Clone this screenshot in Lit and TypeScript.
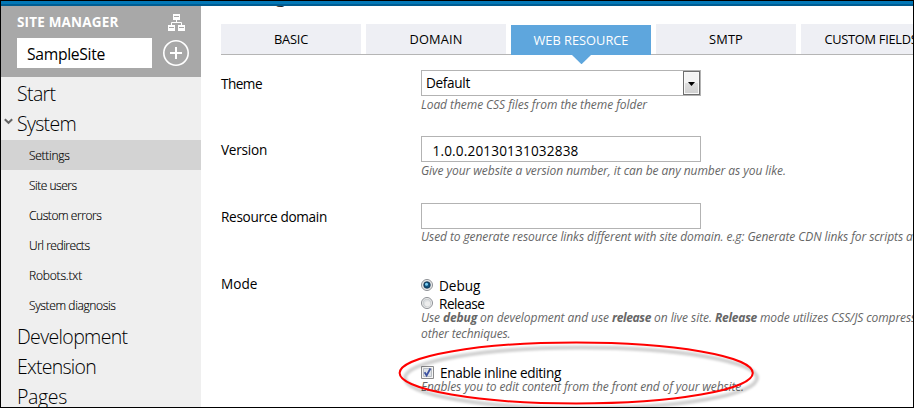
import { LitElement, html, css, svg } from "lit";
import { customElement } from "lit/decorators.js";

// A run of text with the width its line is set to.
const run = (text: string, width: number) =>
  html`<span class="run" data-width=${width}>${text}</span>`;

const subItems: [string, number][] = [
  ["Settings", 40.5],
  ["Site users", 47.5],
  ["Custom errors", 72.5],
  ["Url redirects", 60.5],
  ["Robots.txt", 53],
  ["System diagnosis", 86.5],
];

const tabs: [string, number][] = [
  ["BASIC", 34],
  ["DOMAIN", 53],
  ["WEB RESOURCE", 95],
  ["SMTP", 34],
  ["CUSTOM FIELDS", 93],
];

@customElement("app-root")
export class AppRoot extends LitElement {
  static styles = css`
    :host {
      display: block;
      box-sizing: border-box;
      position: relative;
      width: 914px;
      height: 408px;
      overflow: hidden;
      border: 1px solid #000;
      background: #fff;
      color: #000;
      font-family: "Open Sans", "Noto Sans", sans-serif;
      font-size: 13.6px;
    }
    * { box-sizing: border-box; }
    .run { display: inline-block; white-space: pre; }
    .bar { height: 5px; background: #0277b6; border-bottom: 2px solid #005c91; }
    .page { display: flex; height: 401px; overflow: hidden; }
    .side { width: 200px; flex: none; background: #efefef; font-weight: 300; }
    .head {
      height: 71px;
      background: #a8a8a8;
      display: grid;
      grid-template-columns: 135px 26px;
      grid-template-rows: 32px 30px;
      column-gap: 11px;
      padding-left: 16px;
      align-items: center;
      justify-items: center;
    }
    .brand { justify-self: start; color: #fff; font-weight: 700; font-size: 13.5px; line-height: 20px; }
    .site { width: 135px; height: 30px; background: #fff; padding-left: 10px; font-size: 15.7px; line-height: 32px; font-weight: 400; }
    svg { display: block; }
    .nav { padding-top: 1px; }
    .item { height: 30px; line-height: 31px; padding-left: 16px; font-size: 19.5px; display: flex; }
    .low { line-height: 30px; }
    .chev { width: 16px; margin-left: -16px; padding: 10px 0 0 3px; }
    .sub { margin: 2px 0; }
    .sub div { height: 30px; line-height: 32px; padding-left: 28px; font-size: 12px; font-weight: 300; -webkit-text-stroke: 0.15px #000; }
    .sub .on { background: #d3d3d3; }
    .main { flex: 1; padding-left: 20px; min-width: 0; overflow: hidden; }
    .title { height: 18px; font-size: 21px; font-weight: 300; line-height: 24px; overflow: hidden; }
    .title span { display: block; margin-top: -24px; }
    .tabs { display: flex; gap: 5px; width: 760px; height: 31px; border-bottom: 1px solid #b5b5b5; font-size: 12.8px; }
    .tab { width: 140px; flex: none; height: 30px; background: #eeeff4; line-height: 31px; text-align: center; position: relative; }
    .tab.on { background: #5ea6dd; color: #fff; margin-top: 1px; }
    .tip { position: absolute; left: 61px; top: 30px; }
    .row { display: grid; grid-template-columns: 200px 520px; }
    .r1 { padding-top: 15px; height: 81px; }
    .r2, .r3 { height: 67px; }
    .r4 { height: 93px; }
    .label { line-height: 27px; }
    .r2 .label, .r3 .label { line-height: 28px; }
    .r4 .label { line-height: 27px; }
    .box { width: 280px; height: 26px; border: 1px solid #b3b3b3; line-height: 27px; padding-left: 10.5px; background: #fff; }
    .select { padding: 0 0 0 4px; line-height: 23px; display: flex; justify-content: space-between; }
    .drop { width: 17px; height: 24px; border: 1px solid #6d6d6d; background: linear-gradient(#f3f3f3 0 48%, #dedede 52%, #cfcfcf); box-shadow: inset 0 0 0 1px #f8f8f8; padding: 10px 0 0 4px; }
    .hint { font-size: 12px; font-style: italic; color: #666; line-height: 16px; white-space: nowrap; }
    .r1 .hint { line-height: 17px; }
    .r2 .hint { line-height: 18px; }
    .hint b { font-weight: 700; }
    .mix { display: flex; }
    .mix > * { flex: none; }
    .mix .run { margin-right: 3px; }
    .choice { display: flex; height: 18px; line-height: 19px; gap: 6px; align-items: center; }
    .choice .run { height: 18px; }
    .choice svg { flex: none; }
    .choice + .hint { margin-top: -2px; }
    .radios { padding-top: 6px; }
    .ring { position: absolute; left: 390px; top: 330px; }
  `;

  // Track each run so that it spans exactly its set width.
  firstUpdated() {
    this.renderRoot.querySelectorAll<HTMLElement>(".run").forEach((el) => {
      const want = Number(el.dataset.width);
      const have = el.getBoundingClientRect().width;
      const step = (want - have) / (el.textContent ?? " ").length;
      el.style.letterSpacing = `${step}px`;
    });
  }

  radio(on: boolean) {
    return html`<svg width="12" height="12" viewBox="0 0 12 12">
      <circle cx="6" cy="6" r="5.5" fill="#f4f4f4" stroke="#8c8f94" />
      <circle cx="6" cy="6" r="3.9" fill="#dcdfe1" stroke="#bfc3c6" stroke-width=".7" />
      ${on
        ? svg`<circle cx="6" cy="6" r="3.2" fill="#12537f" stroke="#0c2f4c" stroke-width=".8" />
            <circle cx="5.5" cy="5.3" r="1.5" fill="#7fd0f3" />`
        : svg`<circle cx="6.6" cy="6.8" r="2.6" fill="#ededed" />`}
    </svg>`;
  }

  render() {
    return html`
      <div class="bar"></div>
      <div class="page">
        <div class="side">
          <div class="head">
            <div class="brand">${run("SITE MANAGER", 101.5)}</div>
            <svg width="17" height="17" viewBox="0 0 17 17">
              <path d="M5 0h7v6H5zM0 11h7v6H0zM10 11h7v6h-7z" fill="#fff" />
              <path d="M6 2.5h5M1 13.5h5M11 13.5h5" stroke="#a8a8a8" />
              <path d="M8.5 6v2.5M3.5 11V8.5h10V11" fill="none" stroke="#fff" />
            </svg>
            <div class="site">${run("SampleSite", 78)}</div>
            <svg width="26" height="26" viewBox="0 0 26 26">
              <circle cx="13" cy="13" r="12.2" fill="none" stroke="#fff" stroke-width="1.6" />
              <path d="M13 7v12M7 13h12" stroke="#fff" stroke-width="2" />
            </svg>
          </div>
          <div class="nav">
            <div class="item">${run("Start", 38.5)}</div>
            <div class="item">
              <span class="chev"><svg width="9" height="7" viewBox="0 0 9 7">
                <path d="M0.8 1.2l3.7 3.6 3.7-3.6" fill="none" stroke="#666" stroke-width="2" />
              </svg></span>${run("System", 59)}
            </div>
            <div class="sub">
              ${subItems.map(([t, w], i) => html`<div class=${i === 0 ? "on" : ""}>${run(t, w)}</div>`)}
            </div>
            <div class="item low">${run("Development", 110.5)}</div>
            <div class="item low">${run("Extension", 79)}</div>
            <div class="item low">${run("Pages", 50)}</div>
          </div>
        </div>
        <div class="main">
          <div class="title"><span>Settings</span></div>
          <div class="tabs">
            ${tabs.map(([t, w], i) => html`<div class="tab ${i === 2 ? "on" : ""}">
              ${run(t, w)}${i === 2
                ? html`<svg class="tip" width="19" height="9" viewBox="0 0 19 9"><path d="M0 0h19L9.5 9.3z" fill="#5ea6dd" /></svg>`
                : ""}
            </div>`)}
          </div>
          <div class="row r1">
            <div class="label">${run("Theme", 41)}</div>
            <div>
              <div class="box select">
                ${run("Default", 44)}
                <span class="drop"><svg width="7" height="4" viewBox="0 0 7 4"><path d="M0 0h7L3.5 4z" /></svg></span>
              </div>
              <div class="hint">${run("Load theme CSS files from the theme folder", 226)}</div>
            </div>
          </div>
          <div class="row r2">
            <div class="label">${run("Version", 46)}</div>
            <div>
              <div class="box">${run("1.0.0.20130131032838", 146)}</div>
              <div class="hint">${run("Give your website a version number, it can be any number as you like.", 365)}</div>
            </div>
          </div>
          <div class="row r3">
            <div class="label">${run("Resource domain", 106)}</div>
            <div>
              <div class="box"></div>
              <div class="hint mix">${run("Used to generate resource links different with site domain. e.g: Generate CDN links for scripts", 482)}<span>and styles</span></div>
            </div>
          </div>
          <div class="row r4">
            <div class="label">${run("Mode", 36.5)}</div>
            <div class="radios">
              <div class="choice">${this.radio(true)}${run("Debug", 41.5)}</div>
              <div class="choice">${this.radio(false)}${run("Release", 45.5)}</div>
              <div class="hint mix">
                ${run("Use", 19)}<b>${run("debug", 34)}</b>${run("on development and use", 129)}<b>${run("release", 39)}</b>${run("on live site.", 58)}<b>${run("Release", 42)}</b>${run("mode utilizes CSS/JS compress", 156)}
              </div>
              <div class="hint">${run("other techniques.", 89.5)}</div>
            </div>
          </div>
          <div class="row">
            <div></div>
            <div>
              <div class="choice">
                <svg width="13" height="13" viewBox="0 0 13 13">
                  <path d="M.5.5h12v12H.5z" fill="#f6f6f6" stroke="#8a8b8d" />
                  <path d="M2.5 2.5h8v8h-8z" fill="#dfe2e6" stroke="#b8bdc3" />
                  <path d="M3.6 6.3l2 3.2 3.8-7" fill="none" stroke="#3c51a0" stroke-width="1.8" />
                </svg>${run("Enable inline editing", 121)}
              </div>
              <div class="hint">${run("Enables you to edit content from the front end of your website.", 323)}</div>
            </div>
          </div>
        </div>
      </div>
      <svg class="ring" width="380" height="78" viewBox="391 331 380 78">
        <defs><filter id="soft" x="-5%" y="-20%" width="110%" height="140%"><feGaussianBlur stdDeviation="1.3" /></filter></defs>
        <ellipse cx="581" cy="378" rx="176" ry="30.5" fill="none" stroke="#000" stroke-opacity=".18" stroke-width="4" filter="url(#soft)" />
        <ellipse cx="576.2" cy="373" rx="176.6" ry="30.5" fill="none" stroke="#f00" stroke-width="2" />
      </svg>
    `;
  }
}
